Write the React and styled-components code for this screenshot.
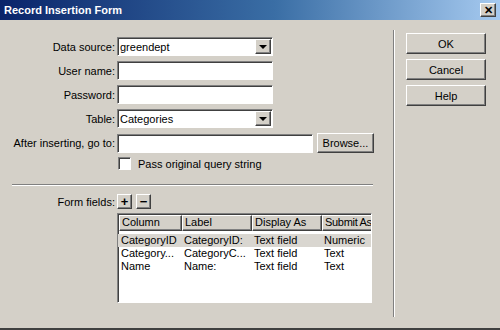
import styled, { createGlobalStyle } from "styled-components";

const Global = createGlobalStyle`
  html, body { margin: 0; padding: 0; background: #d4d0c8; }
  body { font-family: "Liberation Sans", Arial, sans-serif; font-size: 11px; color: #000; }
`;

const raised = `
  background: #d4d0c8;
  border: 1px solid;
  border-color: #ffffff #404040 #404040 #ffffff;
  box-shadow: inset -1px -1px 0 #808080;
`;

const sunken = `
  background: #fff;
  border: 1px solid;
  border-color: #808080 #ffffff #ffffff #808080;
  box-shadow: inset 1px 1px 0 #404040;
`;

const Window = styled.div`
  width: 500px;
  height: 330px;
  box-sizing: border-box;
  display: flex;
  flex-direction: column;
  border-bottom: 2px solid #404040;
  overflow: hidden;
`;

const TitleBar = styled.div`
  height: 20px;
  flex: none;
  display: flex;
  align-items: center;
  justify-content: space-between;
  padding: 0 4px 0 4px;
  background: linear-gradient(90deg, #0a246a 0%, #3a6ea5 55%, #a6caf0 100%);
  color: #fff;
  font-weight: bold;
  font-size: 11px;
`;

const CloseBtn = styled.div`
  ${raised}
  width: 14px;
  height: 12px;
  display: flex;
  align-items: center;
  justify-content: center;
  color: #000;
  font-size: 11px;
  font-weight: bold;
  line-height: 1;
`;

const Body = styled.div`
  flex: 1;
  display: flex;
`;

const Main = styled.div`
  width: 393px;
  flex: none;
  padding-top: 17px;
`;

const Grid = styled.div`
  display: grid;
  grid-template-columns: 115px auto;
  column-gap: 2px;
  row-gap: 5px;
  align-items: center;
`;

const Label = styled.div`
  text-align: right;
  white-space: nowrap;
`;

const Field = styled.div`
  ${sunken}
  box-sizing: border-box;
  width: ${p => p.$w || 156}px;
  height: 19px;
  display: flex;
  align-items: center;
  padding-left: 2px;
  position: relative;
`;

const Arrow = styled.div`
  ${raised}
  position: absolute;
  right: 1px;
  top: 1px;
  width: 14px;
  height: 13px;
  display: flex;
  align-items: center;
  justify-content: center;
  &::after {
    content: "";
    border-left: 4px solid transparent;
    border-right: 4px solid transparent;
    border-top: 4px solid #000;
  }
`;

const Inline = styled.div`
  display: flex;
  align-items: center;
  gap: 4px;
`;

const PushButton = styled.div`
  ${raised}
  box-sizing: border-box;
  width: ${p => p.$w}px;
  height: ${p => p.$h || 21}px;
  display: flex;
  align-items: center;
  justify-content: center;
  font-size: ${p => p.$fs || 11}px;
  font-weight: ${p => p.$bold ? "bold" : "normal"};
`;

const CheckRow = styled.label`
  display: flex;
  align-items: center;
  gap: 7px;
  margin-top: -1px;
  padding-left: 1px;
`;

const Check = styled.span`
  ${sunken}
  width: 11px;
  height: 11px;
`;

const HRule = styled.div`
  margin: 14px 20px 0 12px;
  height: 0;
  border-top: 1px solid #808080;
  border-bottom: 1px solid #fff;
`;

const FieldsRow = styled.div`
  display: grid;
  grid-template-columns: 115px auto;
  column-gap: 2px;
  margin-top: 8px;
  align-items: center;
`;

const Table = styled.div`
  ${sunken}
  margin: 4px 0 0 117px;
  width: 255px;
  height: 90px;
  box-sizing: border-box;
  overflow: hidden;
`;

const Row = styled.div`
  display: grid;
  grid-template-columns: 63px 70px 70px 70px;
  height: 13px;
  line-height: 13px;
  padding-left: 1px;
  background: ${p => p.$sel ? "#d9d6d0" : "transparent"};
  white-space: nowrap;
  & > span { padding-left: 2px; overflow: hidden; }
`;

const HeadRow = styled.div`
  display: grid;
  grid-template-columns: 63px 70px 70px 70px;
  height: 16px;
  margin: 1px 0 3px 1px;
`;

const HeadCell = styled.div`
  ${raised}
  box-sizing: border-box;
  padding-left: 2px;
  line-height: 13px;
  white-space: nowrap;
  letter-spacing: ${p => p.$tight ? "-0.3px" : "normal"};
`;

const VRule = styled.div`
  width: 0;
  margin: 10px 0 11px 0;
  border-left: 1px solid #808080;
  border-right: 1px solid #fff;
`;

const Side = styled.div`
  padding: 13px 0 0 11px;
  display: flex;
  flex-direction: column;
  gap: 5px;
`;

const rows = [
  ["CategoryID", "CategoryID:", "Text field", "Numeric"],
  ["Category...", "CategoryC...", "Text field", "Text"],
  ["Name", "Name:", "Text field", "Text"],
];

export default function App() {
  return (
    <>
      <Global />
      <Window>
        <TitleBar>
          <span>Record Insertion Form</span>
          <CloseBtn>✕</CloseBtn>
        </TitleBar>
        <Body>
          <Main>
            <Grid>
              <Label>Data source:</Label>
              <Field>greendept<Arrow /></Field>
              <Label>User name:</Label>
              <Field />
              <Label>Password:</Label>
              <Field />
              <Label>Table:</Label>
              <Field>Categories<Arrow /></Field>
              <Label>After inserting, go to:</Label>
              <Inline>
                <Field $w={196} />
                <PushButton $w={57} $h={20}>Browse...</PushButton>
              </Inline>
              <span />
              <CheckRow><Check />Pass original query string</CheckRow>
            </Grid>
            <HRule />
            <FieldsRow>
              <Label>Form fields:</Label>
              <Inline>
                <PushButton $w={15} $h={15} $fs={13} $bold>+</PushButton>
                <PushButton $w={15} $h={15} $fs={13} $bold>−</PushButton>
              </Inline>
            </FieldsRow>
            <Table>
              <HeadRow>
                <HeadCell>Column</HeadCell>
                <HeadCell>Label</HeadCell>
                <HeadCell>Display As</HeadCell>
                <HeadCell $tight>Submit As</HeadCell>
              </HeadRow>
              {rows.map((r, i) => (
                <Row key={i} $sel={i === 0}>
                  {r.map((c, j) => <span key={j}>{c}</span>)}
                </Row>
              ))}
            </Table>
          </Main>
          <VRule />
          <Side>
            <PushButton $w={80}>OK</PushButton>
            <PushButton $w={80}>Cancel</PushButton>
            <PushButton $w={80}>Help</PushButton>
          </Side>
        </Body>
      </Window>
    </>
  );
}
